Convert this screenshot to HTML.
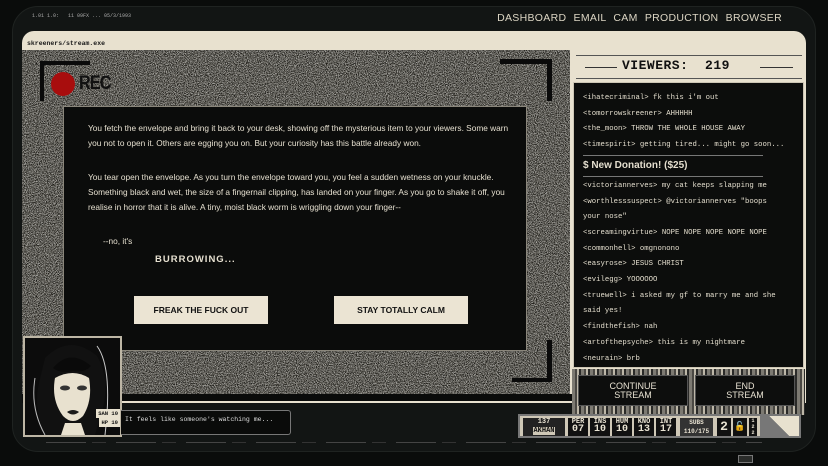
<!DOCTYPE html>
<html><head><meta charset="utf-8">
<style>
*{margin:0;padding:0;box-sizing:border-box}
body{width:828px;height:466px;background:#0a0c0b;position:relative;overflow:hidden;font-family:"Liberation Sans",sans-serif;color:#e8e2d2}
.abs{position:absolute}
.bezel{left:12px;top:6px;width:804px;height:446px;border-radius:26px;background:#121514;border:1px solid #1f2321}
.nav{right:46px;top:12px;font-size:10.5px;letter-spacing:0.3px;color:#ddd6c4;word-spacing:4px}
.tiny{left:32px;top:13px;font-size:5px;color:#aaa;font-family:"Liberation Mono",monospace}
.win{left:22px;top:31px;width:784px;height:372px;background:#e8e1cf;border-radius:12px 12px 0 0}
.title{left:27px;top:40px;font-size:6.5px;font-weight:bold;color:#1a1a1a;font-family:"Liberation Mono",monospace}
.noise{left:22px;top:50px;width:548px;height:344px;overflow:hidden}
.box{left:63px;top:106px;width:464px;height:245px;background:#0b0c0b;border:1px solid #8a867b}
.box p{position:absolute;left:24px;font-size:8.3px;line-height:15px;color:#e6e0d0;width:430px}
.btn{position:absolute;background:#ebe4d3;color:#111;font-weight:bold;font-size:8.5px;text-align:center;line-height:28px;height:28px;width:134px}
.brk{background:#0a0a0a}
.rp{left:572px;top:52px;width:233px;height:318px;background:#e8e1cf}
.chat{left:573px;top:82px;width:231px;height:286px;background:#0c0d0c;border:1px solid #ccc5b4;font-family:"Liberation Mono",monospace;font-size:7.3px;color:#e4dece;padding:8px 0 0 9px;line-height:15.7px;overflow:hidden}
.chat div{white-space:nowrap}
.tex{left:572px;top:369px;width:233px;height:46px;background:repeating-linear-gradient(90deg,#7d7a72 0 3px,#4a4843 3px 5px,#bdb7a8 5px 7px,#2a2a28 7px 9px)}
.sb{position:absolute;background:#0d0e0d;border:1px solid #555;color:#e8e2d2;font-size:9px;text-align:center;line-height:9px;padding-top:6px;font-family:"Liberation Sans",sans-serif}
.stats{left:518px;top:414px;width:283px;height:24px;background:#cfc8b7;border:2px solid #777}
.st{position:absolute;top:2px;height:18px;background:#111;color:#e8e2d2;font-size:7px;font-weight:bold;text-align:center;line-height:8px;font-family:"Liberation Mono",monospace}
</style></head><body>
<div class="abs bezel"></div>
<div class="abs tiny">1.01 1.0:&nbsp;&nbsp;&nbsp;11 09FX ... 05/3/1993</div>
<div class="abs nav">DASHBOARD EMAIL CAM PRODUCTION BROWSER</div>
<div class="abs win"></div>
<div class="abs title">skreeners/stream.exe</div>
<div class="abs noise">
<svg width="548" height="344"><filter id="n" x="0" y="0" width="100%" height="100%" color-interpolation-filters="sRGB"><feTurbulence type="fractalNoise" baseFrequency="1.1" numOctaves="2" seed="5"/><feColorMatrix type="matrix" values="2.4 0 0 0 -0.7  2.4 0 0 0 -0.71  2.4 0 0 0 -0.74  0 0 0 0 1"/></filter>
<rect width="548" height="344" filter="url(#n)"/>
<rect width="548" height="344" fill="#2e2c29" opacity="0.38"/></svg>
</div>
<div class="abs brk" style="left:40px;top:61px;width:50px;height:4px"></div>
<div class="abs brk" style="left:40px;top:61px;width:4px;height:40px"></div>
<div class="abs brk" style="left:500px;top:59px;width:52px;height:5px"></div>
<div class="abs brk" style="left:547px;top:59px;width:5px;height:42px"></div>
<div class="abs brk" style="left:547px;top:340px;width:5px;height:42px"></div>
<div class="abs brk" style="left:512px;top:378px;width:40px;height:4px"></div>
<div class="abs" style="left:51px;top:72px;width:24px;height:24px;border-radius:50%;background:#a80d0d"></div>
<div class="abs" style="left:79px;top:73px;font-size:19px;font-weight:bold;color:#111;letter-spacing:-1px;transform:scaleX(0.85);transform-origin:left">REC</div>
<div class="abs box">
<p style="top:14px">You fetch the envelope and bring it back to your desk, showing off the mysterious item to your viewers. Some warn you not to open it. Others are egging you on. But your curiosity has this battle already won.</p>
<p style="top:63px">You tear open the envelope. As you turn the envelope toward you, you feel a sudden wetness on your knuckle. Something black and wet, the size of a fingernail clipping, has landed on your finger. As you go to shake it off, you realise in horror that it is alive. A tiny, moist black worm is wriggling down your finger--</p>
<p style="top:127px;left:39px">--no, it's</p>
<p style="top:145px;left:91px;font-weight:bold;font-size:9.5px;letter-spacing:1px">BURROWING...</p>
<div class="btn" style="left:70px;top:189px">FREAK THE FUCK OUT</div>
<div class="btn" style="left:270px;top:189px">STAY TOTALLY CALM</div>
</div>
<div class="abs" style="left:22px;top:394px;width:550px;height:9px;background:#0a0b0a"></div>
<div class="abs" style="left:120px;top:401px;width:452px;height:2px;background:#e8e1cf"></div>
<div class="abs rp"></div>
<div class="abs" style="left:576px;top:55px;width:226px;height:1px;background:#555"></div>
<div class="abs" style="left:576px;top:78px;width:226px;height:1px;background:#555"></div>
<div class="abs" style="left:585px;top:67px;width:32px;height:1px;background:#333"></div>
<div class="abs" style="left:760px;top:67px;width:33px;height:1px;background:#333"></div>
<div class="abs" style="left:622px;top:58px;font-family:'Liberation Mono',monospace;font-weight:bold;font-size:13px;color:#111;letter-spacing:0.5px">VIEWERS:&nbsp; 219</div>
<div class="abs chat">
<div>&lt;ihatecriminal&gt; fk this i'm out</div>
<div>&lt;tomorrowskreener&gt; AHHHHH</div>
<div>&lt;the_moon&gt; THROW THE WHOLE HOUSE AWAY</div>
<div>&lt;timespirit&gt; getting tired... might go soon...</div>
<div style="border-top:1px solid #777;border-bottom:1px solid #777;width:180px;height:22px;line-height:20px;font-family:'Liberation Sans',sans-serif;font-weight:bold;font-size:10px;margin:1px 0 2px 0">$ New Donation! ($25)</div>
<div>&lt;victoriannerves&gt; my cat keeps slapping me</div>
<div>&lt;worthlesssuspect&gt; @victoriannerves "boops</div>
<div>your nose"</div>
<div>&lt;screamingvirtue&gt; NOPE NOPE NOPE NOPE NOPE</div>
<div>&lt;commonhell&gt; omgnonono</div>
<div>&lt;easyrose&gt; JESUS CHRIST</div>
<div>&lt;evilegg&gt; YOOOOOO</div>
<div>&lt;truewell&gt; i asked my gf to marry me and she</div>
<div>said yes!</div>
<div>&lt;findthefish&gt; nah</div>
<div>&lt;artofthepsyche&gt; this is my nightmare</div>
<div>&lt;neurain&gt; brb</div>
</div>
<div class="abs tex"></div>
<div class="sb" style="left:578px;top:375px;width:110px;height:31px">CONTINUE<br>STREAM</div>
<div class="sb" style="left:695px;top:375px;width:100px;height:31px">END<br>STREAM</div>
<div class="abs stats">
<div class="st" style="left:3px;width:42px;background:#222;line-height:9px">137<br><span style="background:#cfc8b7;color:#111">AKHAN</span></div>
<div class="st" style="left:48px;width:20px">PER<br><span style="font-size:10px">07</span></div>
<div class="st" style="left:70px;width:20px">INS<br><span style="font-size:10px">10</span></div>
<div class="st" style="left:92px;width:20px">HUM<br><span style="font-size:10px">10</span></div>
<div class="st" style="left:114px;width:20px">KNO<br><span style="font-size:10px">13</span></div>
<div class="st" style="left:136px;width:20px">INT<br><span style="font-size:10px">17</span></div>
<div class="st" style="left:160px;width:33px;background:#333;font-size:6px;line-height:9px">SUBS<br>110/175</div>
<div class="st" style="left:197px;width:14px;font-size:13px;line-height:18px">2</div>
<div class="st" style="left:213px;width:14px;font-size:9px;line-height:18px">&#x1F513;</div>
<div class="st" style="left:229px;width:8px;font-size:5px;line-height:6px">1<br>2<br>2</div>
<div class="abs" style="left:240px;top:0;width:39px;height:20px;background:linear-gradient(45deg,#777 50%,#e8e1cf 50%)"></div>
</div>
<div class="abs" style="left:23px;top:336px;width:99px;height:101px;background:#0c0c0c;border:2px solid #bdb6a5;overflow:hidden">
<svg width="95" height="97">
<path d="M20 20 Q45 -5 72 18 Q85 40 78 70 L70 97 L20 97 Q8 70 14 45 Z" fill="#111"/>
<path d="M30 40 Q48 30 64 40 Q68 62 58 78 Q48 88 38 78 Q26 62 30 40Z" fill="#e8e1cf"/>
<path d="M28 30 Q45 10 66 28 Q60 35 48 33 Q36 36 28 30Z" fill="#0a0a0a"/>
<ellipse cx="40" cy="50" rx="5" ry="2.5" fill="#333"/><ellipse cx="57" cy="50" rx="5" ry="2.5" fill="#333"/>
<path d="M42 74 Q48 70 54 74 Q48 79 42 74Z" fill="#1a1a1a"/>
<path d="M40 85 L56 85 L60 97 L36 97Z" fill="#e8e1cf"/>
<path d="M10 40 Q5 70 20 97" stroke="#bbb" fill="none"/><path d="M72 8 Q88 30 80 97" stroke="#ccc" fill="none"/>
</svg>
<div class="abs" style="right:0;top:71px;background:#e8e1cf;color:#111;font-size:5.5px;font-weight:bold;padding:1px 2px;font-family:'Liberation Mono',monospace">SAN 10</div>
<div class="abs" style="right:0;top:80px;background:#e8e1cf;color:#111;font-size:5.5px;font-weight:bold;padding:1px 2px;font-family:'Liberation Mono',monospace">HP 10</div>
</div>
<div class="abs" style="left:121px;top:410px;width:170px;height:25px;background:#0a0b0a;border:1px solid #777;border-left:none;border-radius:0 3px 3px 0;font-family:'Liberation Mono',monospace;font-size:6.5px;color:#ddd;padding:5px 0 0 4px">It feels like someone's watching me...</div>
<div class="abs" style="left:46px;top:442px;width:716px;height:1px;background:repeating-linear-gradient(90deg,#444 0 40px,transparent 40px 46px,#333 46px 60px,transparent 60px 70px)"></div>
<div class="abs" style="left:738px;top:455px;width:15px;height:8px;border:1px solid #777;background:#2a2c2a"></div>
</body></html>
